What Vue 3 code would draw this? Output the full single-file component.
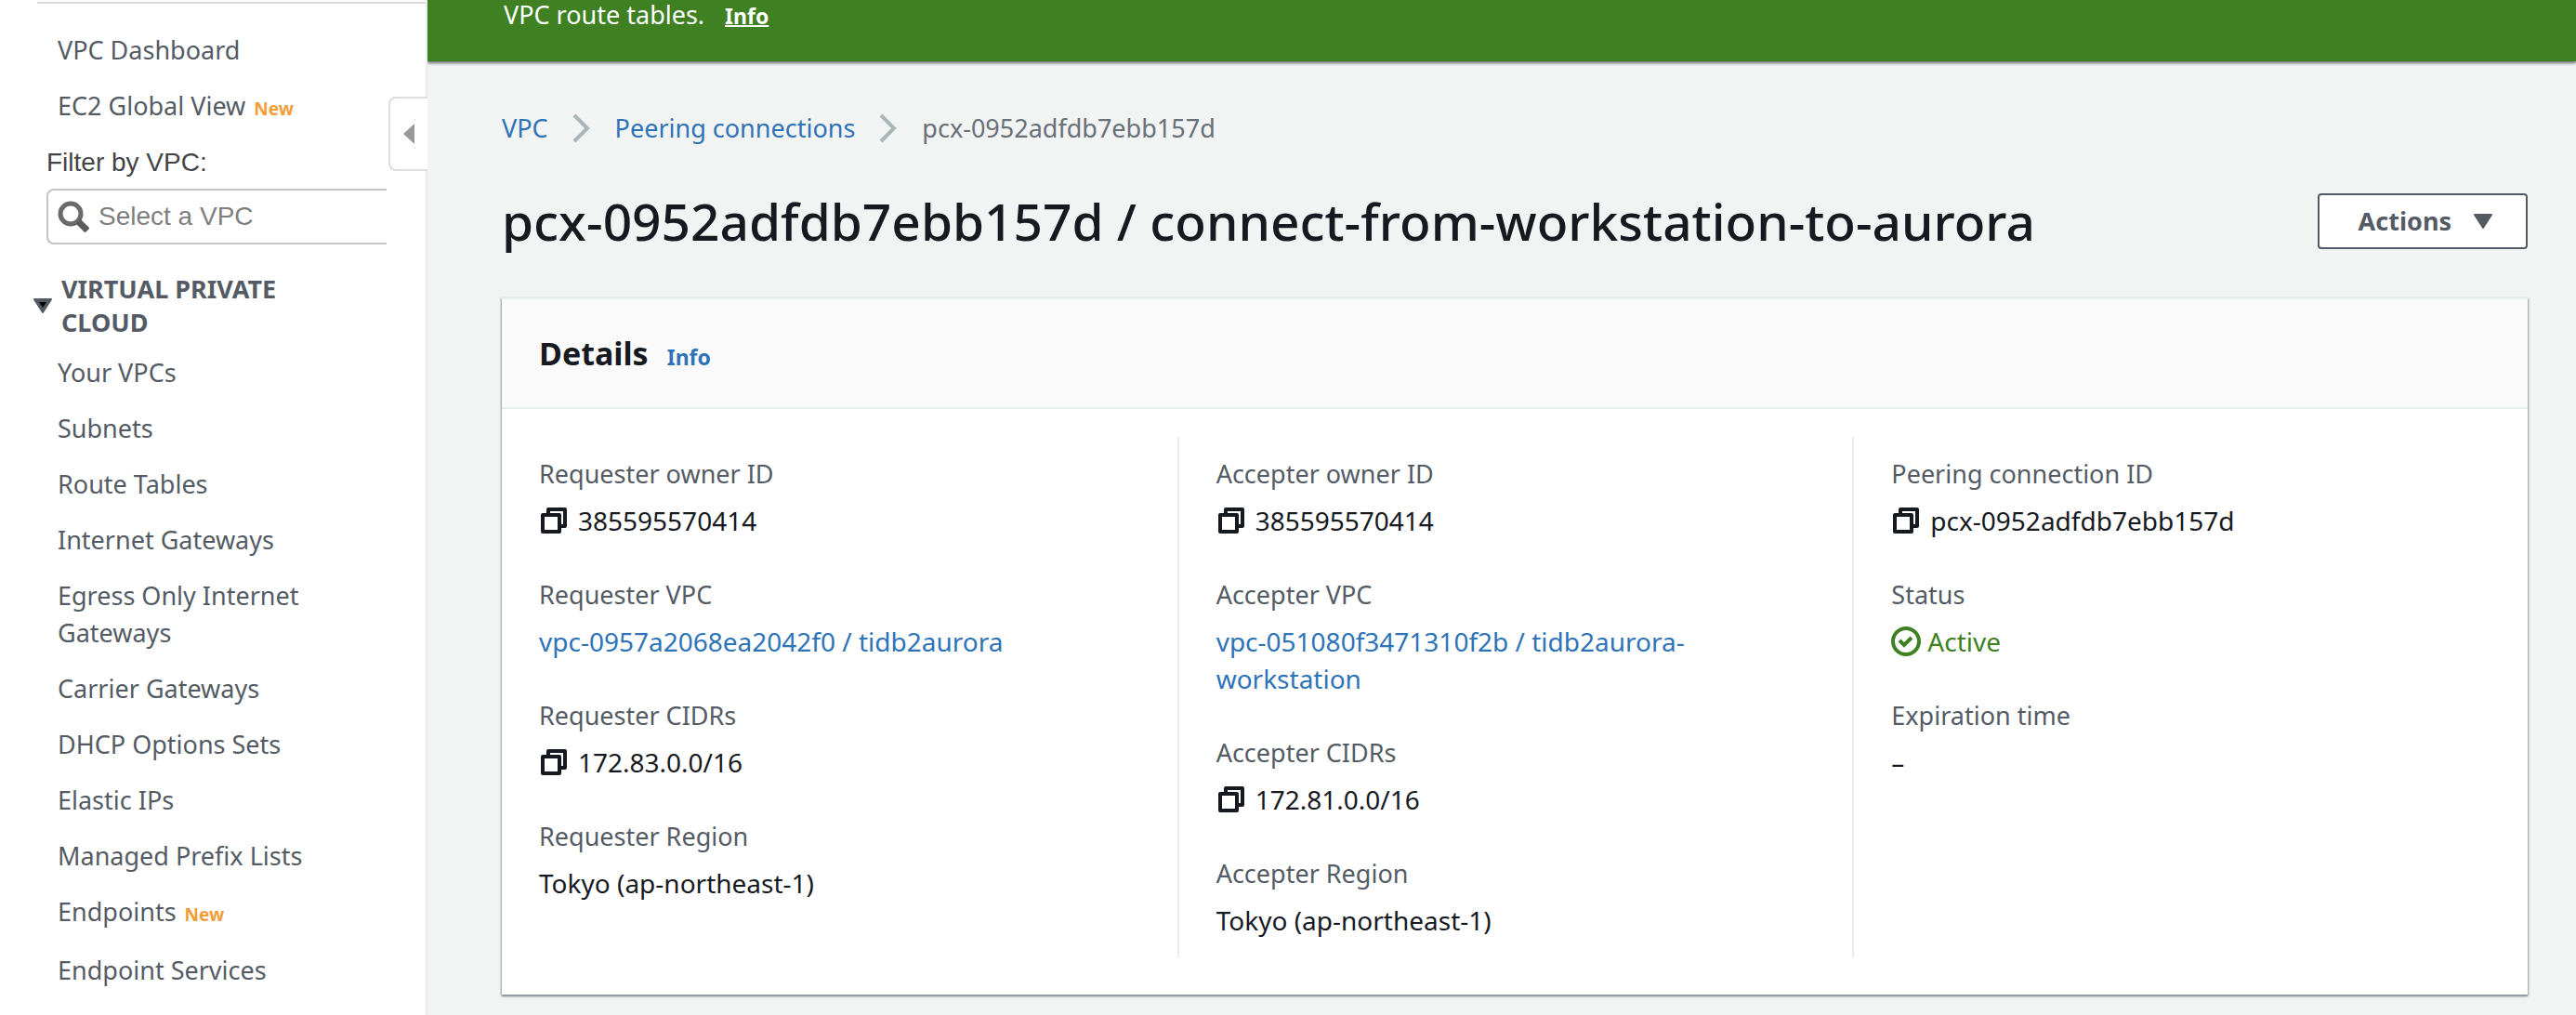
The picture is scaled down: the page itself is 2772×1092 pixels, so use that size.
<script setup>
import { ref } from 'vue'

const filter = ref('')

const topLinks = [
  { text: 'VPC Dashboard' },
  { text: 'EC2 Global View', isNew: true },
]

const cloudLinks = [
  { text: 'Your VPCs' },
  { text: 'Subnets' },
  { text: 'Route Tables' },
  { text: 'Internet Gateways' },
  { text: 'Egress Only Internet Gateways' },
  { text: 'Carrier Gateways' },
  { text: 'DHCP Options Sets' },
  { text: 'Elastic IPs' },
  { text: 'Managed Prefix Lists' },
  { text: 'Endpoints', isNew: true },
  { text: 'Endpoint Services' },
]

const columns = [
  [
    { label: 'Requester owner ID', value: '385595570414', kind: 'copy' },
    { label: 'Requester VPC', value: 'vpc-0957a2068ea2042f0 / tidb2aurora', kind: 'link' },
    { label: 'Requester CIDRs', value: '172.83.0.0/16', kind: 'copy' },
    { label: 'Requester Region', value: 'Tokyo (ap-northeast-1)' },
  ],
  [
    { label: 'Accepter owner ID', value: '385595570414', kind: 'copy' },
    { label: 'Accepter VPC', value: 'vpc-051080f3471310f2b / tidb2aurora-workstation', kind: 'link' },
    { label: 'Accepter CIDRs', value: '172.81.0.0/16', kind: 'copy' },
    { label: 'Accepter Region', value: 'Tokyo (ap-northeast-1)' },
  ],
  [
    { label: 'Peering connection ID', value: 'pcx-0952adfdb7ebb157d', kind: 'copy' },
    { label: 'Status', value: 'Active', kind: 'status' },
    { label: 'Expiration time', value: '–' },
  ],
]
</script>

<template>
  <div class="console">
    <aside class="sidebar">
      <nav class="nav">
        <ul class="links">
          <li v-for="item in topLinks" :key="item.text">
            <a href="#">{{ item.text }}</a>
            <span v-if="item.isNew" class="new">New</span>
          </li>
        </ul>
        <label class="filter-label" for="vpc-filter">Filter by VPC:</label>
        <div class="filter">
          <svg class="search" viewBox="0 0 34 34" aria-hidden="true">
            <circle cx="14" cy="14" r="11" fill="none" stroke="#6a6a6a" stroke-width="5" />
            <path d="M22 22l10 10" stroke="#5c5c5c" stroke-width="7" />
          </svg>
          <input id="vpc-filter" v-model="filter" type="text" placeholder="Select a VPC" />
        </div>
        <h2 class="section">
          <svg class="caret" viewBox="0 0 20 16" aria-hidden="true">
            <path d="M1 1h18l-9 14z" fill="#545b64" stroke="#545b64" stroke-width="2" stroke-linejoin="round" />
            <path d="M6 4h8l-4 6z" fill="#000" />
          </svg>
          <span>VIRTUAL PRIVATE CLOUD</span>
        </h2>
        <ul class="links">
          <li v-for="item in cloudLinks" :key="item.text">
            <a href="#">{{ item.text }}</a>
            <span v-if="item.isNew" class="new">New</span>
          </li>
        </ul>
      </nav>
      <button class="collapse" type="button" aria-label="Collapse navigation">
        <svg viewBox="0 0 12 22" aria-hidden="true"><path d="M12 0v22L0 11z" fill="#999" /></svg>
      </button>
    </aside>

    <div class="main">
      <div class="banner">
        <span>VPC route tables.</span>
        <a href="#">Info</a>
      </div>

      <main class="content">
        <nav class="crumbs" aria-label="Breadcrumb">
          <a href="#">VPC</a>
          <svg viewBox="0 0 20 32" aria-hidden="true"><path d="M2 2l14 14L2 30" /></svg>
          <a href="#">Peering connections</a>
          <svg viewBox="0 0 20 32" aria-hidden="true"><path d="M2 2l14 14L2 30" /></svg>
          <span>pcx-0952adfdb7ebb157d</span>
        </nav>

        <header class="title">
          <h1>pcx-0952adfdb7ebb157d / connect-from-workstation-to-aurora</h1>
          <button class="actions" type="button">
            Actions
            <svg viewBox="0 0 20 16" aria-hidden="true">
              <path d="M1 1h18l-9 14z" fill="#545b64" stroke="#545b64" stroke-width="2" stroke-linejoin="round" />
            </svg>
          </button>
        </header>

        <section class="card">
          <div class="card-head">
            <h2>Details</h2>
            <a href="#">Info</a>
          </div>
          <div class="columns">
            <dl v-for="(column, i) in columns" :key="i" class="column">
              <div v-for="field in column" :key="field.label" class="field">
                <dt>{{ field.label }}</dt>
                <dd v-if="field.kind === 'copy'" class="copy">
                  <button type="button" aria-label="Copy">
                    <svg viewBox="0 0 32 32" aria-hidden="true">
                      <path d="M4 10h18v18H4zM10 10V4h18v18h-6" fill="none" stroke="#16191f" stroke-width="4" stroke-linejoin="round" />
                    </svg>
                  </button>
                  <span>{{ field.value }}</span>
                </dd>
                <dd v-else-if="field.kind === 'link'"><a href="#">{{ field.value }}</a></dd>
                <dd v-else-if="field.kind === 'status'" class="status">
                  <svg viewBox="0 0 32 32" aria-hidden="true">
                    <circle cx="16" cy="16" r="14" />
                    <path d="M9 15l5 5 8-8" />
                  </svg>
                  <span>{{ field.value }}</span>
                </dd>
                <dd v-else>{{ field.value }}</dd>
              </div>
            </dl>
          </div>
        </section>
      </main>
    </div>
  </div>
</template>

<style>
body {
  margin: 0;
  background: #f2f3f3;
  overflow: hidden;
}
</style>

<style scoped>
.console {
  display: flex;
  min-height: 100vh;
  font-family: "Noto Sans", "Open Sans", sans-serif;
  font-size: 27px;
  line-height: 40px;
  color: #16191f;
}
a {
  color: #2e73b8;
  text-decoration: none;
}
button {
  font: inherit;
  cursor: pointer;
}
h1,
h2,
ul,
dl,
dd {
  margin: 0;
  padding: 0;
}
svg {
  display: block;
  flex: none;
}

.sidebar {
  position: relative;
  box-sizing: border-box;
  flex: none;
  width: 460px;
  background: #fff;
  border-right: 2px solid #eaeded;
}
.nav {
  margin: 2px 0 0 40px;
  padding-top: 30px;
  border-top: 2px solid #d9d9d9;
}
.links {
  display: flex;
  flex-direction: column;
  gap: 20px;
  padding: 0 90px 0 22px;
  list-style: none;
}
.links a {
  color: #545b64;
}
.new {
  margin-left: 9px;
  font-size: 19px;
  font-weight: 700;
  color: #f29d38;
}
.filter-label {
  display: block;
  margin: 18px 0 8px 10px;
  font-family: "Liberation Sans", Arial, sans-serif;
  font-size: 28px;
  color: #444;
}
.filter {
  display: flex;
  align-items: center;
  gap: 10px;
  box-sizing: border-box;
  height: 60px;
  margin: 0 42px 30px 10px;
  padding-left: 10px;
  border: 2px solid #c4c4c4;
  border-right: 0;
  border-radius: 8px 0 0 8px;
}
.search {
  width: 34px;
  height: 34px;
}
.filter input {
  flex: 1;
  min-width: 0;
  padding: 0;
  border: 0;
  outline: 0;
  background: none;
  font-family: "Liberation Sans", Arial, sans-serif;
  font-size: 28px;
  color: #444;
}
.filter input::placeholder {
  color: #7f7f7f;
  opacity: 1;
}
.section {
  display: flex;
  align-items: center;
  gap: 10px;
  margin: 0 120px 16px -4px;
  font-size: 27px;
  line-height: 36px;
  font-weight: 700;
  color: #545b64;
}
.caret {
  width: 20px;
  height: 16px;
}
.collapse {
  position: absolute;
  top: 104px;
  right: -2px;
  display: flex;
  align-items: center;
  box-sizing: border-box;
  width: 42px;
  height: 80px;
  padding: 0 0 0 14px;
  border: 2px solid #ddd;
  border-right: 0;
  border-radius: 8px 0 0 8px;
  background: #fff;
}
.collapse svg {
  width: 12px;
  height: 22px;
}

.main {
  flex: 1;
  min-width: 0;
}
.banner {
  display: flex;
  align-items: baseline;
  gap: 22px;
  padding: 0 52px 30px 82px;
  margin-top: -4px;
  background: #3e8022;
  color: #fff;
  box-shadow: 0 2px 3px #687078;
}
.banner a,
.card-head a {
  font-size: 23px;
  line-height: 32px;
  font-weight: 700;
}
.banner a {
  color: #fff;
  text-decoration: underline;
  text-decoration-thickness: 2px;
}
.content {
  padding: 52px 52px 24px 80px;
}
.crumbs {
  display: flex;
  align-items: center;
  gap: 26px;
  color: #687078;
}
.crumbs svg {
  width: 20px;
  height: 32px;
  fill: none;
  stroke: #aab7b8;
  stroke-width: 4;
}
.title {
  display: flex;
  align-items: center;
  justify-content: space-between;
  margin: 40px 0 42px;
}
h1 {
  font-size: 55px;
  line-height: 80px;
  font-weight: 500;
}
.actions {
  display: flex;
  align-items: center;
  gap: 24px;
  box-sizing: border-box;
  height: 60px;
  padding: 0 36px 0 42px;
  border: 2px solid #545b64;
  border-radius: 4px;
  background: #fff;
  font-weight: 700;
  color: #545b64;
}
.actions svg {
  width: 20px;
  height: 16px;
}
.card {
  background: #fff;
  border-top: 2px solid #eaeded;
  box-shadow: 0 2px 2px #879196, 1px 1px 2px #aab7b8, -1px 1px 2px #aab7b8;
}
.card-head {
  display: flex;
  align-items: baseline;
  gap: 20px;
  padding: 36px 40px;
  border-bottom: 2px solid #eaeded;
  background: #fafafa;
}
.card-head h2 {
  font-size: 34px;
  line-height: 44px;
  font-weight: 700;
}
.columns {
  display: grid;
  grid-template-columns: repeat(3, minmax(0, 1fr));
  padding: 30px 0 40px;
}
.column {
  display: flex;
  flex-direction: column;
  gap: 40px;
  padding: 20px 40px;
}
.column + .column {
  border-left: 2px solid #eaeded;
}
.field {
  display: flex;
  flex-direction: column;
  gap: 10px;
}
.field dt {
  color: #545b64;
}
.field dd {
  font-size: 28px;
}
.copy,
.status {
  display: flex;
  align-items: center;
}
.copy {
  gap: 10px;
}
.copy button {
  padding: 0;
  border: 0;
  background: none;
}
.copy svg,
.status svg {
  width: 32px;
  height: 32px;
}
.status {
  gap: 7px;
  color: #3e8022;
}
.status svg {
  fill: none;
  stroke: #3e8022;
  stroke-width: 4;
}
</style>
